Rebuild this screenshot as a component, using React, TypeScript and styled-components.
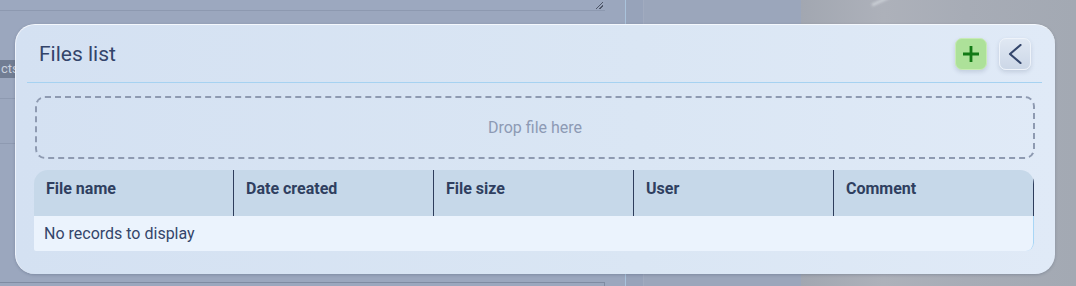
import styled, { createGlobalStyle } from 'styled-components'

const GlobalStyle = createGlobalStyle`
    html, body {
        margin: 0;
        padding: 0;
        width: 1076px;
        height: 286px;
        overflow: hidden;
        font-family: Roboto, "Liberation Sans", Arial, sans-serif;
    }
`

const Page = styled.div`
    position: relative;
    width: 1076px;
    height: 286px;
    display: flex;
    overflow: hidden;
`

const LeftArea = styled.div`
    width: 625px;
    background: #9ba7be;
    display: flex;
    flex-direction: column;
    border-right: 1px solid #aac3dc;
`

const TextareaStrip = styled.div`
    height: 10px;
    margin: 0 20px 0 0;
    border-bottom: 1px solid #8d99b0;
    background: #9ca8bf;
    position: relative;
`

const ResizeHandle = styled.div`
    position: absolute;
    right: 2px;
    bottom: 1px;
    width: 7px;
    height: 7px;
    background: linear-gradient(135deg, transparent 45%, #4e5668 45%, #4e5668 55%, transparent 55%, transparent 70%, #4e5668 70%, #4e5668 80%, transparent 80%);
`

const SideLabel = styled.span`
    align-self: flex-start;
    background: #717d93;
    color: #c9d1de;
    font-size: 13px;
    height: 18px;
    line-height: 18px;
    padding: 0 3px 0 1px;
    margin-top: 49px;
`

const SideLine = styled.div<{ $gap: number }>`
    margin-top: ${p => p.$gap}px;
    border-top: 1px solid #8e9ab1;
`

const BottomBox = styled.div`
    margin-top: auto;
    height: 3px;
    margin-right: 20px;
    border-top: 1px solid #7f8ba2;
    border-right: 1px solid #7f8ba2;
`

const Gutter = styled.div`
    width: 17px;
    background: #97a3ba;
    border-right: 1px solid #a1abbf;
`

const RightArea = styled.div`
    flex: 1;
    display: flex;
    background: #a0a8b6;
`

const BlueBand = styled.div`
    width: 157px;
    background: #9ba6bb;
`

const PhotoArea = styled.div`
    flex: 1;
    background: linear-gradient(90deg, #a2a7b1 0%, #adb1ba 30%, #a7acb6 60%, #a3a9b3 100%);
    position: relative;
`

const PhotoGlint = styled.div`
    position: absolute;
    left: 70px;
    top: -1px;
    width: 22px;
    height: 3px;
    background: #c9cdd4;
    transform: rotate(-25deg);
    filter: blur(1px);
`

const Panel = styled.section`
    position: absolute;
    left: 15px;
    top: 24px;
    width: 1040px;
    height: 250px;
    box-sizing: border-box;
    border-radius: 20px;
    background: linear-gradient(90deg, #d4e1f2 0%, #dae6f4 60%, #e0eaf7 100%);
    border-top: 1px solid #f4f8fd;
    border-left: 1px solid #eef3fb;
    box-shadow: 0 1px 3px rgba(40, 55, 85, 0.25);
    display: flex;
    flex-direction: column;
    padding: 0 13px 0 11px;
`

const PanelHeader = styled.header`
    height: 57px;
    display: flex;
    align-items: center;
    border-bottom: 1px solid #a6d2f1;
    padding: 0 11px 0 12px;
    gap: 12px;
`

const Title = styled.h2`
    margin: 0;
    flex: 1;
    font-size: 21px;
    font-weight: 400;
    color: #33446a;
    padding-top: 1px;
`

const IconButton = styled.button<{ $variant: 'add' | 'back' }>`
    width: 32px;
    height: 32px;
    border-radius: 7px;
    padding: 0;
    display: flex;
    align-items: center;
    justify-content: center;
    cursor: pointer;
    border: 1px solid ${p => p.$variant === 'add' ? '#c8ebb6' : '#eef3fa'};
    background: ${p => p.$variant === 'add'
        ? '#ade199'
        : 'linear-gradient(180deg, #e0e8f3 0%, #ccd7e7 100%)'};
    box-shadow: 0 2px 4px rgba(60, 80, 110, 0.18);
`

const Body = styled.div`
    display: flex;
    flex-direction: column;
    padding: 13px 7px 0 8px;
    gap: 11px;
`

const DropZone = styled.div`
    height: 59px;
    border: 2px dashed #8e9ab1;
    border-radius: 10px;
    display: flex;
    align-items: center;
    justify-content: center;
    color: #8d9ab4;
    font-size: 16px;
`

const Table = styled.div`
    width: 1000px;
    margin-left: -1px;
    border-radius: 14px 14px 8px 2px;
    overflow: hidden;
`

const HeadRow = styled.div`
    display: grid;
    grid-template-columns: repeat(5, 200px);
    height: 46px;
    background: #c6d8e9;
`

const HeadCell = styled.div`
    padding: 9px 0 0 12px;
    border-right: 1px solid #2e3d5c;
    font-size: 16px;
    line-height: 19px;
    font-weight: 700;
    color: #2f3f60;
`

const EmptyRow = styled.div`
    height: 35px;
    background: #ebf3fd;
    display: flex;
    align-items: center;
    padding-left: 10px;
    font-size: 16px;
    color: #34456a;
    border-right: 1px solid #a8d6f6;
    border-radius: 0 0 8px 0;
`

const columns = ['File name', 'Date created', 'File size', 'User', 'Comment']

export default function App() {
    return (
        <Page>
            <GlobalStyle />
            <LeftArea>
                <TextareaStrip>
                    <ResizeHandle />
                </TextareaStrip>
                <SideLabel>cts</SideLabel>
                <SideLine $gap={20} />
                <SideLine $gap={44} />
                <BottomBox />
            </LeftArea>
            <Gutter />
            <RightArea>
                <BlueBand />
                <PhotoArea>
                    <PhotoGlint />
                </PhotoArea>
            </RightArea>

            <Panel>
                <PanelHeader>
                    <Title>Files list</Title>
                    <IconButton $variant="add" aria-label="Add file">
                        <svg width="18" height="18" viewBox="0 0 18 18">
                            <path d="M9 1v16M1 9h16" stroke="#137a16" strokeWidth="2.8" fill="none" />
                        </svg>
                    </IconButton>
                    <IconButton $variant="back" aria-label="Back">
                        <svg width="14" height="20" viewBox="0 0 14 20">
                            <path d="M12.5 1L2 10L12.5 19" stroke="#34466b" strokeWidth="2.2" fill="none" strokeLinecap="round" strokeLinejoin="round" />
                        </svg>
                    </IconButton>
                </PanelHeader>
                <Body>
                    <DropZone>Drop file here</DropZone>
                    <Table>
                        <HeadRow>
                            {columns.map(c => <HeadCell key={c}>{c}</HeadCell>)}
                        </HeadRow>
                        <EmptyRow>No records to display</EmptyRow>
                    </Table>
                </Body>
            </Panel>
        </Page>
    )
}
